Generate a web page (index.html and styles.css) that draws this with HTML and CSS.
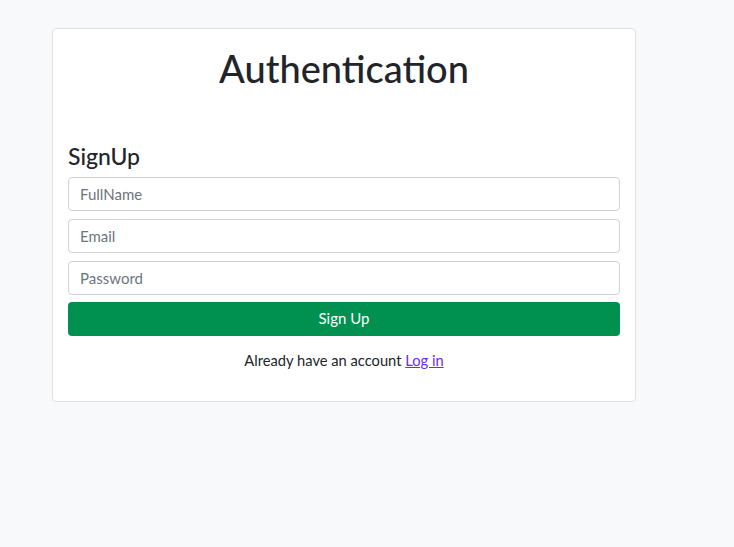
FILE: index.html
```html
<!DOCTYPE html>
<html lang="en">
<head>
<meta charset="utf-8">
<title>Authentication</title>
<link rel="stylesheet" href="styles.css">
</head>
<body>
<div class="page">
  <div class="card">
    <h1 class="title">Authentication</h1>
    <form class="form">
      <h4 class="form-title">SignUp</h4>
      <input class="field" type="text" placeholder="FullName">
      <input class="field" type="email" placeholder="Email">
      <input class="field" type="password" placeholder="Password">
      <button class="btn" type="button">Sign Up</button>
    </form>
    <p class="switch">Already have an account <a class="link" href="#">Log in</a></p>
  </div>
</div>
</body>
</html>
```

FILE: styles.css
```css
html, body {
  margin: 0;
  padding: 0;
}
body {
  background: #f8f9fa;
  color: #212529;
  font-family: Lato, "Noto Sans", sans-serif;
  font-size: 16px;
  line-height: 1.5;
}
.page {
  padding: 28px 0 0 52px;
}
.card {
  box-sizing: border-box;
  width: 584px;
  background: #fff;
  border: 1px solid #dfe0e1;
  border-radius: 4px;
  padding: 15px;
}
.title {
  margin: 0;
  font-size: 38px;
  font-weight: 500;
  line-height: 48px;
  text-align: center;
}
.form {
  display: flex;
  flex-direction: column;
  gap: 8px;
  margin-top: 50px;
}
.form-title {
  margin: 0 0 -1px;
  font-size: 23px;
  font-weight: 500;
  line-height: 28px;
}
.field {
  box-sizing: border-box;
  height: 34px;
  width: 100%;
  margin: 0;
  padding: 0 11px 1px;
  border: 1px solid #ced4da;
  border-radius: 4px;
  font-family: inherit;
  font-size: 15px;
  color: #212529;
  background: #fff;
}
.field::placeholder {
  color: #6c757d;
  opacity: 1;
}
.btn {
  box-sizing: border-box;
  height: 34px;
  width: 100%;
  margin: -1px 0 0;
  padding: 0 0 3px;
  border: 0;
  border-radius: 4px;
  background: #00904f;
  color: #fff;
  font-family: inherit;
  font-size: 15px;
}
.switch {
  margin: 12px 0 14px;
  text-align: center;
  font-size: 14.7px;
  line-height: 24px;
}
.link {
  color: #6a2cf5;
  text-decoration: underline;
}
```
